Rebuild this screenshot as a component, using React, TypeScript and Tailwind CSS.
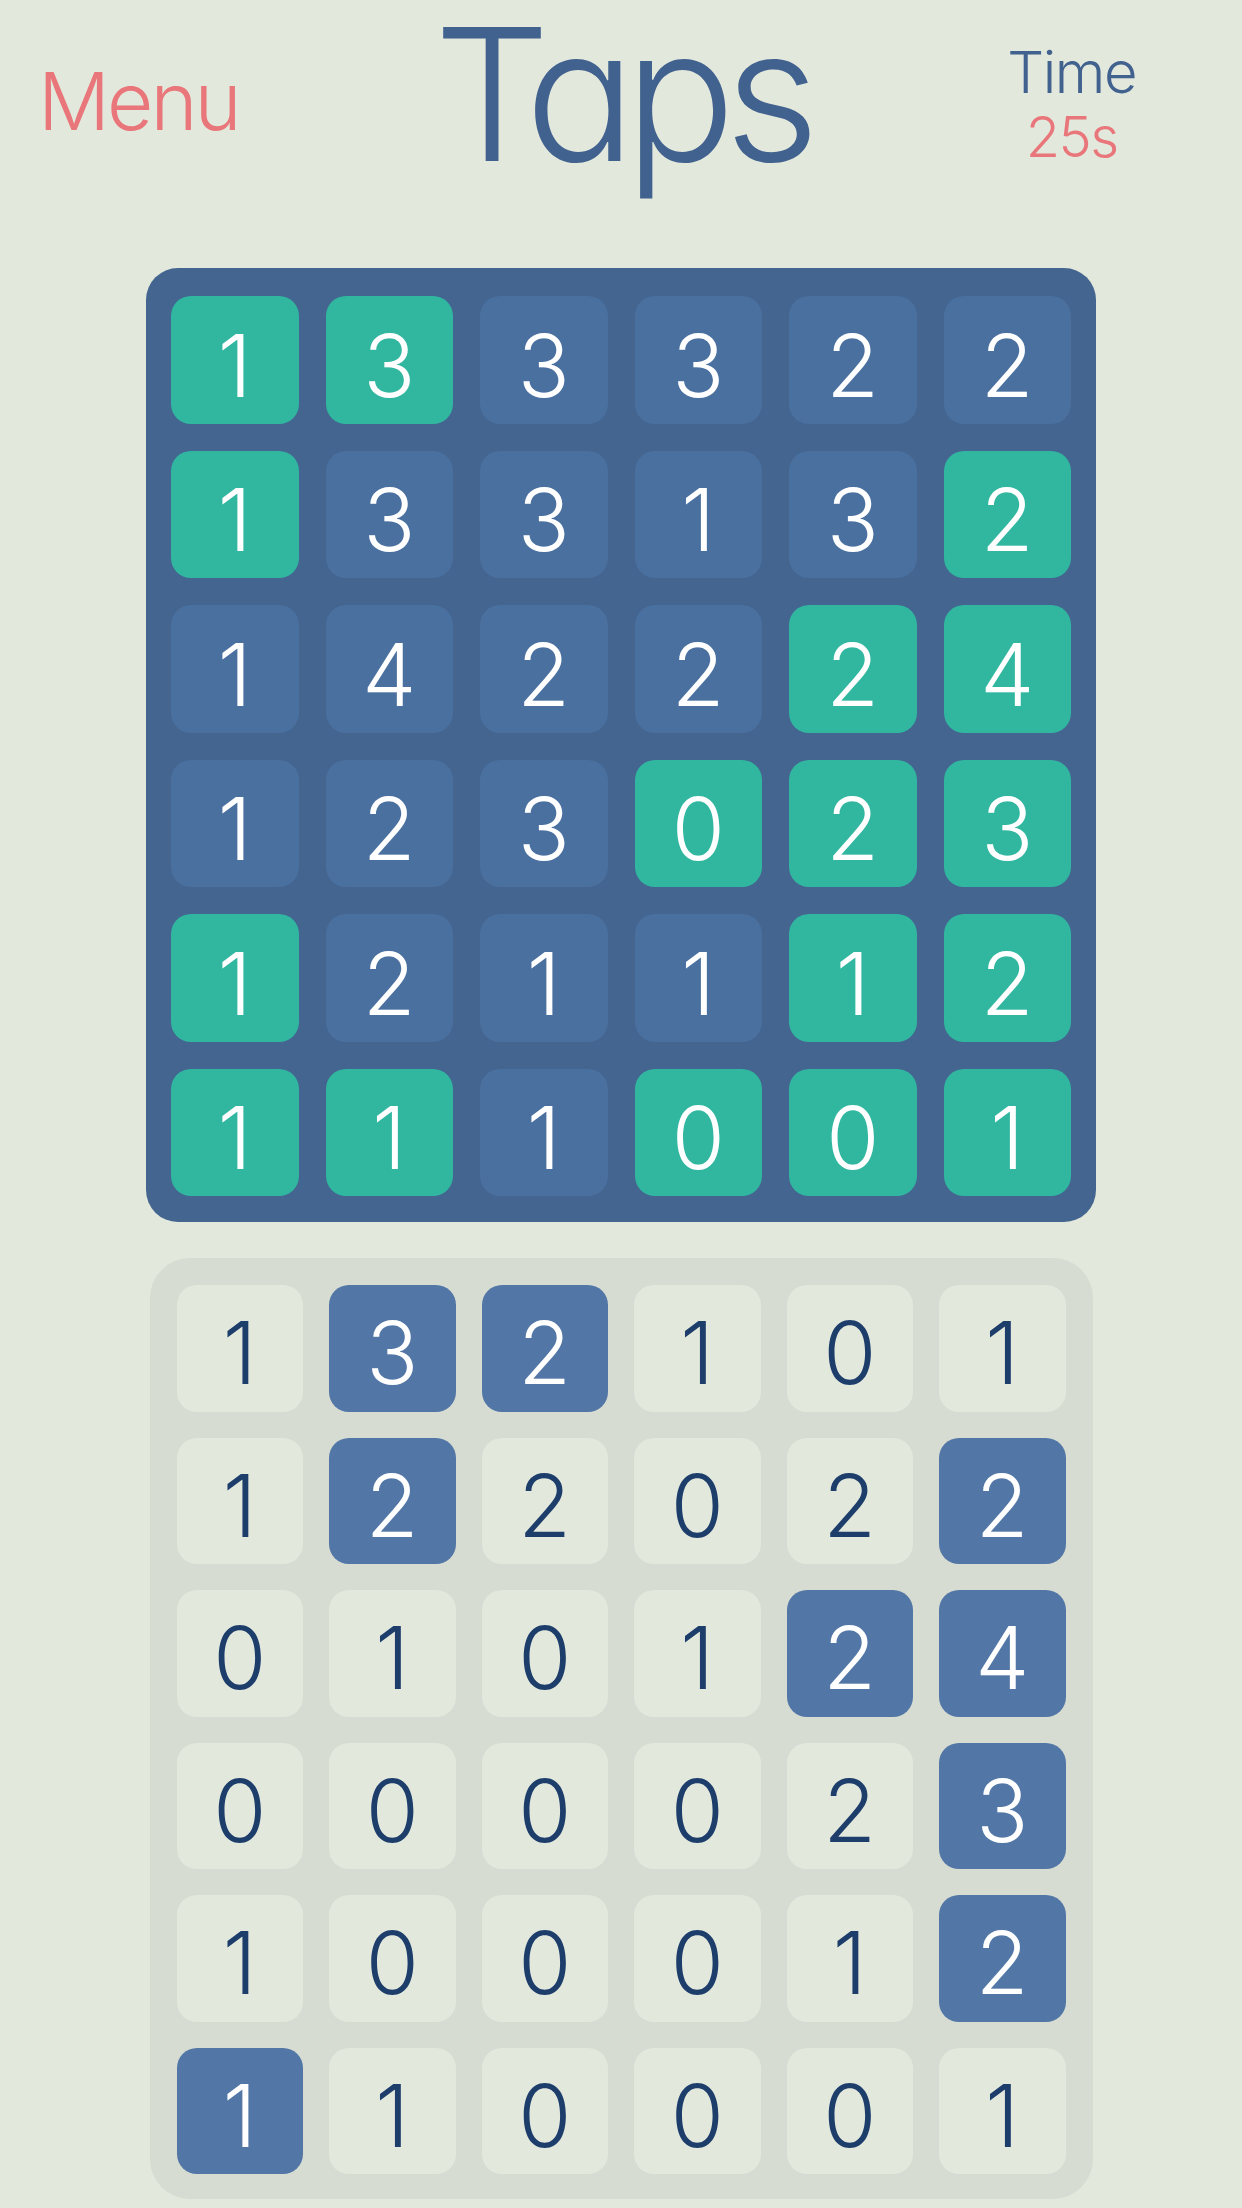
import React from 'react';

type Cell = [number, boolean];

// top board: [value, solved]
const board: Cell[][] = [
  [[1, true], [3, true], [3, false], [3, false], [2, false], [2, false]],
  [[1, true], [3, false], [3, false], [1, false], [3, false], [2, true]],
  [[1, false], [4, false], [2, false], [2, false], [2, true], [4, true]],
  [[1, false], [2, false], [3, false], [0, true], [2, true], [3, true]],
  [[1, true], [2, false], [1, false], [1, false], [1, true], [2, true]],
  [[1, true], [1, true], [1, false], [0, true], [0, true], [1, true]],
];

// bottom board: [value, tapped]
const taps: Cell[][] = [
  [[1, false], [3, true], [2, true], [1, false], [0, false], [1, false]],
  [[1, false], [2, true], [2, false], [0, false], [2, false], [2, true]],
  [[0, false], [1, false], [0, false], [1, false], [2, true], [4, true]],
  [[0, false], [0, false], [0, false], [0, false], [2, false], [3, true]],
  [[1, false], [0, false], [0, false], [0, false], [1, false], [2, true]],
  [[1, true], [1, false], [0, false], [0, false], [0, false], [1, false]],
];

const font = "font-['Inter','Noto_Sans',sans-serif] [font-feature-settings:'cv11']";

export default function App() {
  return (
    <div className={`min-h-[2208px] w-full bg-[#e3e8dc] ${font}`}>
      {/* header */}
      <div className="grid h-[268px] grid-cols-[1fr_auto_1fr]">
        <div className="justify-self-start pl-[38px] pt-[61px] text-[80px] font-light leading-none tracking-[-3px] text-[#e8767a]">
          Menu
        </div>
        <div className="pt-[2px] text-[184px] font-light leading-none tracking-[-11px] text-[#41618f]">
          Taps
        </div>
        <div className="flex flex-col items-center justify-self-end pr-[106px] pt-[43px] font-light leading-none">
          <span className="text-[58px] tracking-[-1.5px] text-[#41618f]">Time</span>
          <span className="mt-[8px] text-[56px] tracking-[-1.5px] text-[#e8767a]">25s</span>
        </div>
      </div>

      {/* solution board */}
      <div className="mx-auto w-[950px] rounded-[32px] bg-[#43658f] px-[25px] pb-[26px] pt-[28px]">
        <div className="grid grid-cols-6 gap-[27px]">
          {board.flat().map(([v, done], i) => (
            <div
              key={i}
              className={`flex aspect-square items-center justify-center rounded-[20px] pt-[12px] text-[86px] font-light leading-none text-white ${
                done ? 'bg-[#31b7a0]' : 'bg-[#4a70a0]'
              }`}
            >
              {v}
            </div>
          ))}
        </div>
      </div>

      {/* tap board */}
      <div className="mx-auto mt-[36px] w-[943px] rounded-[40px] bg-[#d6dcd2] px-[27px] pb-[25px] pt-[27px]">
        <div className="grid grid-cols-6 gap-[26px]">
          {taps.flat().map(([v, on], i) => (
            <div
              key={i}
              className={`flex aspect-square items-center justify-center rounded-[20px] pt-[10px] text-[86px] font-light leading-none ${
                on ? 'bg-[#5277a6] text-white' : 'bg-[#e3e8dd] text-[#1d3d6b]'
              }`}
            >
              {v}
            </div>
          ))}
        </div>
      </div>
    </div>
  );
}
